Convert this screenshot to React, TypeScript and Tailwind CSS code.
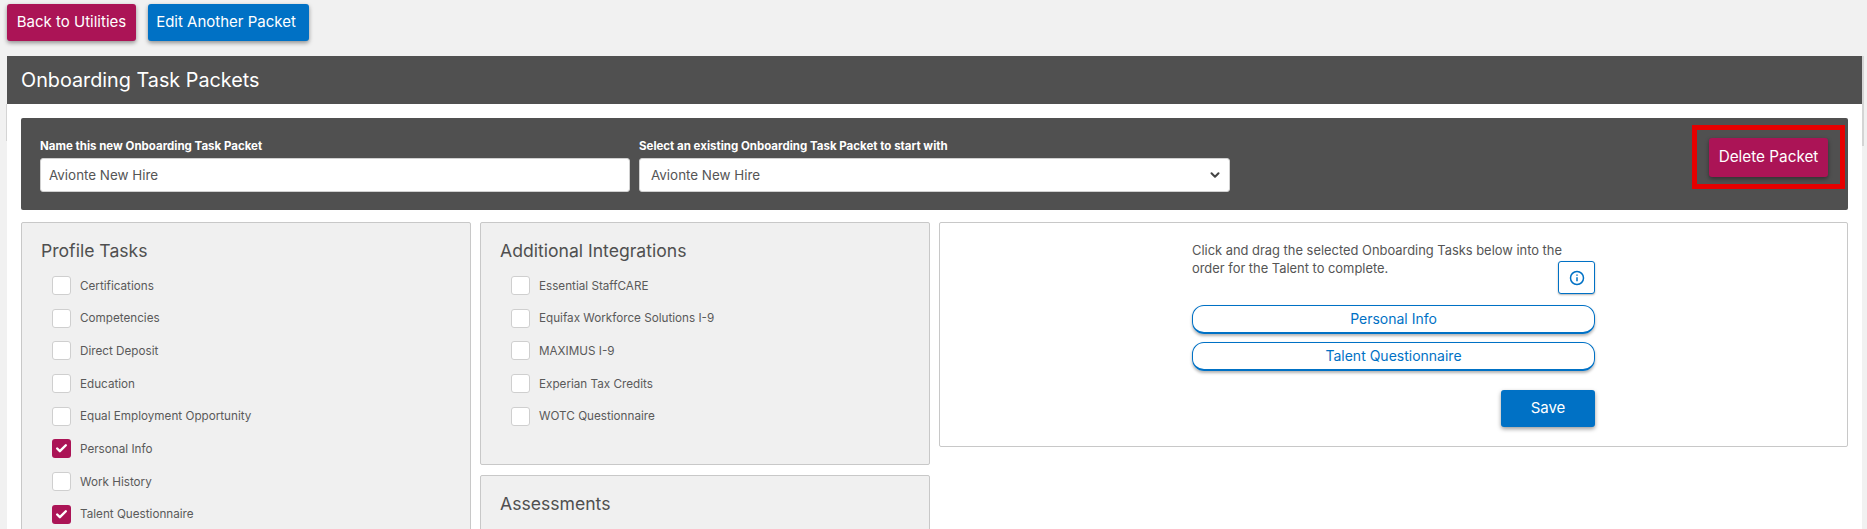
import { Check, ChevronDown } from 'lucide-react'

const FONT = 'font-["Inter","Noto_Sans",sans-serif]'

const PROFILE_TASKS = [
  { label: 'Certifications' },
  { label: 'Competencies' },
  { label: 'Direct Deposit' },
  { label: 'Education' },
  { label: 'Equal Employment Opportunity' },
  { label: 'Personal Info', checked: true },
  { label: 'Work History' },
  { label: 'Talent Questionnaire', checked: true },
]

const INTEGRATIONS = [
  { label: 'Essential StaffCARE' },
  { label: 'Equifax Workforce Solutions I-9' },
  { label: 'MAXIMUS I-9' },
  { label: 'Experian Tax Credits' },
  { label: 'WOTC Questionnaire' },
]

function TaskRow({ label, checked }: { label: string; checked?: boolean }) {
  return (
    <div className="flex items-center h-[32.7px]">
      {checked ? (
        <span className="w-[19px] h-[19px] rounded-[3px] bg-[#ab1456] flex items-center justify-center">
          <Check size={13} strokeWidth={4.5} className="text-white" />
        </span>
      ) : (
        <span className="w-[19px] h-[19px] rounded-[3px] bg-white border border-[#cfcfcf]" />
      )}
      <span className="ml-[9px] text-[11.7px] text-[#5a5a5a] relative top-[1px]">{label}</span>
    </div>
  )
}

function Panel({ title, children, className }: { title: string; children?: React.ReactNode; className: string }) {
  return (
    <div className={`bg-[#f0f0f0] border border-[#c8c8c8] rounded-[2px] pl-[19px] pt-[15px] ${className}`}>
      <h3 className="text-[17.6px] leading-[26px] text-[#4f4f4f]">{title}</h3>
      <div className="ml-[11px] mt-[5px]">{children}</div>
    </div>
  )
}

export default function App() {
  return (
    <div className={`h-[529px] overflow-hidden bg-[#f1f1f1] pl-[7px] pr-[5px] pt-[4px] ${FONT}`}>
      <div className="flex gap-[12px] h-[37px]">
        <button className="w-[129px] rounded-[3px] bg-[#ab1456] text-white text-[15px] shadow-[0_2px_4px_rgba(0,0,0,0.4)]">
          Back to Utilities
        </button>
        <button className="w-[161px] pr-[5px] rounded-[3px] bg-[#0071c5] text-white text-[15px] shadow-[0_2px_4px_rgba(0,0,0,0.4)]">
          Edit Another Packet
        </button>
      </div>

      <div className="mt-[15px] h-[473px] bg-white relative">
        <span className="absolute -left-[1px] top-[48px] w-[1px] h-[37px] bg-[#d4d4d4]" />
        <span className="absolute -right-[2px] top-0 w-[2px] h-[90px] bg-[#d4d4d4]" />
        <div className="h-[48px] bg-[#505050] flex items-center pl-[14px] pt-[2px] text-white text-[19.8px]">
          Onboarding Task Packets
        </div>

        <div className="pl-[14px] pr-[14px] pt-[14px]">
          <div className="h-[92px] bg-[#505050] rounded-[2px] flex pl-[19px] relative">
            <div className="w-[590px] pt-[20px]">
              <div className="text-[11.5px] leading-[16px] font-bold text-white">Name this new Onboarding Task Packet</div>
              <input
                readOnly
                value="Avionte New Hire"
                className="mt-[4px] w-full h-[34px] bg-white rounded-[3px] border border-[#d0d0d0] pl-[8px] text-[13.4px] text-[#555555] outline-none"
              />
            </div>
            <div className="w-[591px] ml-[9px] pt-[20px]">
              <div className="text-[11.5px] leading-[16px] font-bold text-white">Select an existing Onboarding Task Packet to start with</div>
              <div className="mt-[4px] h-[34px] bg-white rounded-[3px] border border-[#d0d0d0] pl-[11px] pr-[7px] flex items-center justify-between text-[13.4px] text-[#555555]">
                Avionte New Hire
                <ChevronDown size={14} strokeWidth={3.5} className="text-[#444444]" />
              </div>
            </div>
            <div className="absolute left-[1671px] top-[7px] w-[153px] h-[64px] border-[5px] border-[#e60000] flex items-center justify-center">
              <button className="shrink-0 w-[119px] h-[39px] rounded-[3px] bg-[#ab1456] text-white text-[15.3px] shadow-[0_2px_4px_rgba(0,0,0,0.4)]">
                Delete Packet
              </button>
            </div>
          </div>

          <div className="mt-[12px] flex gap-[9px] items-start">
            <Panel title="Profile Tasks" className="w-[450px] h-[400px]">
              {PROFILE_TASKS.map((t) => (
                <TaskRow key={t.label} label={t.label} checked={t.checked} />
              ))}
            </Panel>

            <div className="w-[450px] flex flex-col gap-[10px]">
              <Panel title="Additional Integrations" className="h-[243px]">
                {INTEGRATIONS.map((t) => (
                  <TaskRow key={t.label} label={t.label} />
                ))}
              </Panel>
              <Panel title="Assessments" className="h-[100px]" />
            </div>

            <div className="w-[909px] h-[225px] bg-white border border-[#c8c8c8] rounded-[2px] flex justify-center">
              <div className="w-[403px] pt-[19px]">
                <p className="w-[385px] text-[12.9px] leading-[18px] text-[#555555]">
                  Click and drag the selected Onboarding Tasks below into the order for the Talent to complete.
                </p>
                <div className="flex justify-end -mt-[17px]">
                  <span className="w-[37px] h-[33px] bg-white border border-[#0071c5] rounded-[3px] flex items-center justify-center shadow-[0_1px_2px_rgba(0,0,0,0.3)]">
                    <svg width="16" height="16" viewBox="0 0 16 16" fill="none" stroke="#0071c5" strokeWidth="1.5">
                      <circle cx="8" cy="8" r="6.5" />
                      <path d="M8 7.2v4" />
                      <path d="M8 4.6v1.2" />
                    </svg>
                  </span>
                </div>
                <div className="mt-[11px] h-[29px] pb-[2px] rounded-[12px] border border-[#0071c5] border-b-2 flex items-center justify-center text-[14px] text-[#0071c5] shadow-[0_2px_3px_rgba(0,0,0,0.3)]">
                  Personal Info
                </div>
                <div className="mt-[8px] h-[29px] pb-[2px] rounded-[12px] border border-[#0071c5] border-b-2 flex items-center justify-center text-[14px] text-[#0071c5] shadow-[0_2px_3px_rgba(0,0,0,0.3)]">
                  Talent Questionnaire
                </div>
                <div className="flex justify-end mt-[19px]">
                  <button className="w-[94px] h-[37px] rounded-[3px] bg-[#0071c5] text-white text-[15px] shadow-[0_2px_4px_rgba(0,0,0,0.4)]">
                    Save
                  </button>
                </div>
              </div>
            </div>
          </div>
        </div>
      </div>
    </div>
  )
}
